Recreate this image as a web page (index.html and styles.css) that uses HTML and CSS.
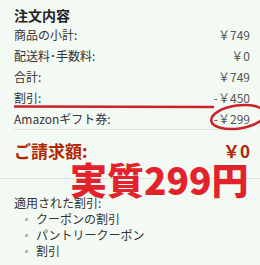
FILE: index.html
```html
<!DOCTYPE html>
<html lang="ja">
<head>
    <meta charset="UTF-8">
    <title>注文内容</title>
    <link rel="stylesheet" href="styles.css">
</head>
<body>
    <div class="summary">
        <div class="title">注文内容</div>
        <div class="row"><span>商品の小計:</span><span class="val">￥749</span></div>
        <div class="row"><span>配送料･手数料:</span><span class="val">￥0</span></div>
        <div class="row"><span>合計:</span><span class="val">￥749</span></div>
        <div class="row"><span>割引:</span><span class="val">-￥450</span></div>
        <div class="row last"><span>Amazonギフト券:</span><span class="val">-￥299</span></div>
        <div class="total"><span>ご請求額:</span><span>￥0</span></div>
    </div>
    <div class="applied">
        <div class="applied-title">適用された割引:</div>
        <ul>
            <li>クーポンの割引</li>
            <li>パントリークーポン</li>
            <li>割引</li>
        </ul>
    </div>

    <!-- hand drawn marks on top -->
    <svg class="marks" width="260" height="140" viewBox="0 0 260 140">
        <path d="M14 106.5 L214 107" stroke="#c9232c" stroke-width="2.5" fill="none"/>
        <ellipse cx="238" cy="117" rx="27" ry="11.5" transform="rotate(-8 238 117)" stroke="#c9232c" stroke-width="2.5" fill="none"/>
    </svg>
    <div class="stamp">実質299円</div>
</body>
</html>
```

FILE: styles.css
```css
body {
    margin: 0;
    background-color: #f3f9f3;
    color: #333;
    font-family: "Noto Sans CJK JP", "Noto Sans", sans-serif;
    font-size: 12px;
    position: relative;
    width: 260px;
    height: 265px;
    overflow: hidden;
}

.summary {
    padding: 7px 10px 0 14px;
    border-bottom: 1px solid #dde2dd;
}

.title {
    font-size: 14px;
    font-weight: bold;
    line-height: 17px;
    color: #222;
}

.row {
    display: flex;
    justify-content: space-between;
    line-height: 21px;
}

.row .val {
    color: #555;
}

.row.last {
    border-bottom: 1px solid #dde2dd;
}

.total {
    display: flex;
    justify-content: space-between;
    padding: 9px 0 15px;
    line-height: 24px;
    font-size: 17px;
    font-weight: bold;
    color: #b12704;
}

.applied {
    padding: 16px 10px 0 14px;
}

.applied-title {
    line-height: 16px;
}

.applied ul {
    margin: 0;
    padding: 0 0 0 22px;
    list-style: none;
}

.applied li {
    line-height: 16px;
    position: relative;
}

.applied li::before {
    content: "";
    position: absolute;
    left: -11px;
    top: 7px;
    width: 3px;
    height: 3px;
    background: #b5b9b5;
}

.marks {
    position: absolute;
    left: 0;
    top: 0;
}

.stamp {
    position: absolute;
    left: 70px;
    top: 161px;
    font-size: 37px;
    line-height: 37px;
    font-weight: 900;
    color: #e3232c;
    white-space: nowrap;
}
```
